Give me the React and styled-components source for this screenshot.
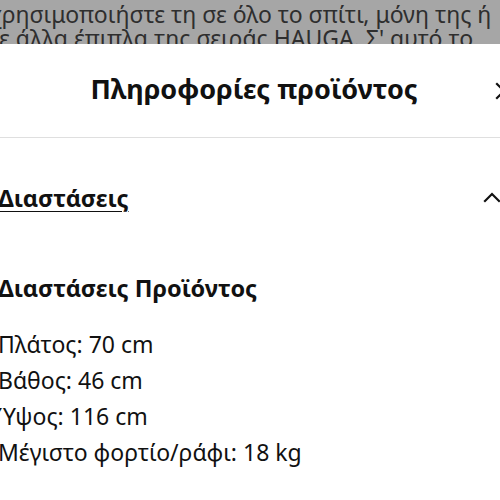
import React from 'react'
import styled, { createGlobalStyle } from 'styled-components'

const GlobalStyle = createGlobalStyle`
  html, body {
    margin: 0;
    padding: 0;
    background: #fff;
    overflow: hidden;
  }
  body {
    font-family: "Noto Sans", "Open Sans", sans-serif;
    color: #111;
  }
`

const Page = styled.div`
  padding-top: 2px;
`

const PageLine = styled.p`
  margin: 0 0 0 ${props => props.shift}px;
  font-size: 23px;
  line-height: 24px;
  color: #484848;
  white-space: nowrap;
`

const Scrim = styled.div`
  position: fixed;
  inset: 0;
  background: rgba(0, 0, 0, 0.35);
`

const Sheet = styled.div`
  position: fixed;
  top: 44px;
  bottom: 0;
  left: -26px;
  width: 560px;
  background: #fff;
  display: flex;
  flex-direction: column;
`

const Header = styled.div`
  height: 93px;
  display: flex;
  align-items: center;
  justify-content: center;
  position: relative;
  border-bottom: 1px solid #dfdfdf;
`

const Title = styled.h2`
  margin: 0 0 4px;
  font-size: 27px;
  font-weight: 700;
`

const CloseButton = styled.button`
  position: absolute;
  right: 10px;
  top: 50%;
  transform: translateY(-50%);
  width: 40px;
  height: 40px;
  border: 0;
  padding: 0;
  background: transparent;
  display: flex;
  align-items: center;
  justify-content: center;
  color: #111;
`

const Body = styled.div`
  padding: 0 30px 0 24px;
`

const AccordionButton = styled.button`
  width: 100%;
  height: 120px;
  border: 0;
  padding: 0;
  background: transparent;
  display: flex;
  align-items: center;
  justify-content: space-between;
  font-family: inherit;
  color: #111;
`

const AccordionLabel = styled.span`
  font-size: 23.5px;
  font-weight: 700;
  text-decoration: underline;
  text-underline-offset: 4px;
  text-decoration-thickness: 1px;
`

const Subheading = styled.h3`
  margin: 14px 0 0;
  font-size: 23.5px;
  line-height: 32px;
  font-weight: 700;
`

const Specs = styled.ul`
  list-style: none;
  margin: 22px 0 0;
  padding: 0;
`

const Spec = styled.li`
  font-size: 23px;
  line-height: 36px;
  color: #111;
`

const Icon = ({ children }) => (
  <svg width="24" height="24" viewBox="0 0 24 24" fill="none" stroke="currentColor" strokeWidth="2.2" strokeLinecap="square">
    {children}
  </svg>
)

const specs = [
  'Πλάτος: 70 cm',
  'Βάθος: 46 cm',
  'Ύψος: 116 cm',
  'Μέγιστο φορτίο/ράφι: 18 kg'
]

export default function App () {
  return (
    <>
      <GlobalStyle />
      <Page>
        <PageLine shift={-12}>χρησιμοποιήστε τη σε όλο το σπίτι, μόνη της ή</PageLine>
        <PageLine shift={-15}>με άλλα έπιπλα της σειράς HAUGA. Σ' αυτό το</PageLine>
      </Page>
      <Scrim />
      <Sheet>
        <Header>
          <Title>Πληροφορίες προϊόντος</Title>
          <CloseButton aria-label='Κλείσιμο'>
            <Icon><path d='M5 5l14 14M19 5L5 19' /></Icon>
          </CloseButton>
        </Header>
        <Body>
          <AccordionButton>
            <AccordionLabel>Διαστάσεις</AccordionLabel>
            <Icon><path d='M5 15l7-7 7 7' /></Icon>
          </AccordionButton>
          <Subheading>Διαστάσεις Προϊόντος</Subheading>
          <Specs>
            {specs.map(s => <Spec key={s}>{s}</Spec>)}
          </Specs>
        </Body>
      </Sheet>
    </>
  )
}
